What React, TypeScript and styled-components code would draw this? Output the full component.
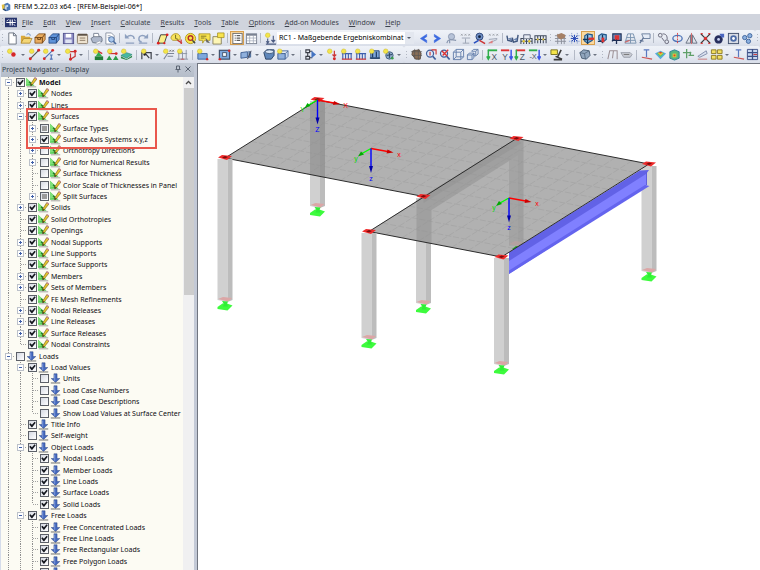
import React, { useEffect, useRef } from "react";
import styled, { createGlobalStyle, css } from "styled-components";

const GlobalStyle = createGlobalStyle`
  * { box-sizing: border-box; }
  html, body { margin: 0; padding: 0; overflow: hidden; }
  body, button, input, select {
    font-family: "Noto Sans", "Open Sans", sans-serif;
    font-size: 7px;
  }
  button { border: 0; background: none; padding: 0; color: inherit; }
`;

/* ---------- shell ---------- */

const Shell = styled.div`
  display: flex;
  flex-direction: column;
  height: 100vh;
  background: #fff;
  color: #1c1c1c;
  overflow: hidden;
`;

const TitleBar = styled.header`
  display: flex;
  align-items: center;
  gap: 3px;
  height: 14px;
  padding-left: 1px;
  flex: none;
`;

const Title = styled.h1`
  margin: 0;
  font-size: 7px;
  font-weight: 400;
  line-height: 14px;
  color: #000;
`;

const MenuBar = styled.nav`
  display: flex;
  align-items: center;
  height: 16px;
  flex: none;
  background: #d0d4dd;
`;

const MenuItem = styled.button`
  padding: 1px 5px 0;
  font-size: 7px;
  line-height: 15px;
  color: #3b414b;
  &::first-letter { text-decoration: underline; }
`;

const ToolbarRow = styled.div`
  display: flex;
  align-items: stretch;
  height: ${(p: { $h: number }) => p.$h}px;
  flex: none;
  background: #d4d9e3;
  overflow: hidden;
`;

const ToolGroup = styled.div<{ $grow?: boolean; $sep: number }>`
  --sep: ${(p) => p.$sep}px;
  display: flex;
  align-items: center;
  flex: ${(p) => (p.$grow ? "1 0 auto" : "none")};
  padding-right: 1px;
  border-radius: 2px;
  background: linear-gradient(#eff2f8, #e6eaf2 55%, #d9dee9);
`;

const Grip = styled.span`
  width: 5px;
  height: 10px;
  flex: none;
  background: radial-gradient(circle, #9aa1ae 1px, transparent 1px) 0 0 / 5px 3px;
  opacity: 0.7;
`;

const Separator = styled.span`
  width: var(--sep);
  height: 10px;
  flex: none;
  background: linear-gradient(#b4bac6, #b4bac6) center / 1px 100% no-repeat;
`;

const ToolButton = styled.button<{ $active?: boolean }>`
  display: grid;
  place-items: center;
  width: 14px;
  height: 14px;
  flex: none;
  ${(p) =>
    p.$active &&
    css`
      background: #fbd9a0;
      box-shadow: inset 0 0 0 1px #d9a04e;
    `}
`;

const Drop = styled.button`
  display: grid;
  place-items: center;
  width: 8px;
  height: 14px;
  flex: none;
  &::before {
    content: "";
    border: 2px solid transparent;
    border-top-color: #6b7280;
    border-bottom: 0;
  }
`;

const ComboBox = styled.div`
  position: relative;
  width: 137px;
  height: 12px;
  margin-right: 2px;
  flex: none;
  background: #fff;
  &::after {
    content: "";
    position: absolute;
    right: 3px;
    top: 5px;
    border: 2px solid transparent;
    border-top-color: #555c69;
    border-bottom: 0;
  }
`;

const Combo = styled.select`
  appearance: none;
  width: 100%;
  height: 12px;
  padding: 0 10px 0 2px;
  border: 0;
  border-radius: 0;
  background: linear-gradient(#e3e7ef, #e3e7ef) right / 9px 100% no-repeat;
  color: #000;
  line-height: 12px;
  font-family: "Noto Sans", sans-serif;
  font-size: 7px;
`;

/* ---------- icons ---------- */

const Icon = ({ name, size = 13 }: { name: string; size?: number }) => (
  <svg width={size} height={size} viewBox="0 0 14 14" fill="none" aria-hidden="true">
    {ICONS[name]}
  </svg>
);

const spark = <circle cx="4" cy="3.5" r="2.5" fill="#f3e54a" stroke="#c9b52a" strokeWidth=".5" />;
const lens = (
  <>
    <circle cx="6.5" cy="6" r="3.8" fill="#dfe9f8" stroke="#3f5f9c" strokeWidth="1.3" />
    <path d="M9.5 9l3 3.4" stroke="#3f5f9c" strokeWidth="1.8" />
  </>
);
const axisLetter = (main: string, other: string, letter: string) => (
  <>
    <path d="M2 2.500h10" stroke={main} strokeWidth="2" />
    <path d="M2.500 2v9.500M.8 9l1.700 3L4.200 9" stroke={other} strokeWidth="1.600" />
    <text x="9" y="12.500" textAnchor="middle" fontSize="9" fill="#4a5566" fontFamily="Liberation Sans, sans-serif">
      {letter}
    </text>
  </>
);

const ICONS: Record<string, React.ReactNode> = {
  app: (
    <>
      <path d="M4 3l5-2 4 3v7l-5 2-4-3z" fill="#4b77b5" />
      <path d="M6 5l4-1v3H8v4H5z" fill="#c8d8ea" />
      <path d="M1 4l4-1v6l-3 2z" fill="#e2bf3e" />
      <path d="M3 10l4 2" stroke="#26456f" strokeWidth="2" />
    </>
  ),
  menuApp: (
    <>
      <rect x="0" y="2" width="14" height="11" fill="#28356e" />
      <path d="M1.500 7.500h11M6 4v7M8.500 4v7" stroke="#fff" strokeWidth="1.200" />
      <path d="M2 6l2-2M10 10l2 1M11 4l1 2" stroke="#fff" />
    </>
  ),
  new: <path d="M3 1h5.500L11 3.500V13H3zM8 1v3h3" fill="#fff" stroke="#6b7280" />,
  open: (
    <>
      <path d="M1 12V4h4l1 1h5v7z" fill="#d9a93a" />
      <path d="M1 12l3-5h9l-2.500 5z" fill="#f4d676" stroke="#a17a24" strokeWidth=".7" />
      <path d="M7 3c2-2 4-1 4 1" stroke="#4f7bb8" />
    </>
  ),
  boxOrange: (
    <>
      <path d="M1 6l4-4h7v6l-3 4H1z" fill="#e9ac5e" stroke="#7a4a17" strokeWidth=".8" />
      <path d="M1 6h8l3-4M9 6v6M4 6v2h3V6" stroke="#6d4216" />
    </>
  ),
  boxBlue: (
    <>
      <path d="M1 6l4-4h7v6l-3 4H1z" fill="#5f93d9" stroke="#23457c" strokeWidth=".8" />
      <path d="M1 6h8l3-4M9 6v6M4 6v2h3V6" stroke="#23457c" />
    </>
  ),
  save: (
    <>
      <rect x="1.500" y="1.500" width="11" height="11" fill="#8d8cc4" stroke="#56558e" />
      <rect x="4" y="2" width="6" height="4" fill="#fff" />
      <rect x="3.500" y="8" width="7" height="4" fill="#dfe3f2" />
    </>
  ),
  saveAll: (
    <>
      <rect x="1.500" y="2.500" width="11" height="10" rx="1" fill="#eee3d0" stroke="#8a7a66" />
      <path d="M2 3h10" stroke="#5d5246" strokeWidth="2" />
      <path d="M4 6.500h6M4 9h6" stroke="#8a7a66" />
    </>
  ),
  print: (
    <>
      <path d="M4 6V1.500h5l1 4" fill="#fff" stroke="#7b8494" />
      <path d="M1 7l3-2h8l1 2v3l-3 1.500H3z" fill="#aeb8cb" stroke="#5f6878" strokeWidth=".8" />
      <path d="M5 12l6-2.500 1 2-4 1.500z" fill="#fff" stroke="#8a93a3" strokeWidth=".6" />
    </>
  ),
  preview: (
    <>
      <path d="M2 1h6l3 3v9H2z" fill="#fff" stroke="#8a93a3" />
      <path d="M4 4h3M4 6h2" stroke="#9aa3b3" />
      <circle cx="8" cy="8" r="3" fill="#a9c7ec" stroke="#4a6c9f" />
      <path d="M10 10l3 3" stroke="#4a6c9f" strokeWidth="1.600" />
    </>
  ),
  undo: (
    <>
      <path d="M2 2v5h5z" fill="#8ea0bf" />
      <path d="M4 5.500C7 3 12 3 12 7.500M3 12h9" stroke="#8ea0bf" strokeWidth="1.500" />
    </>
  ),
  redo: (
    <>
      <path d="M12 2v5H7z" fill="#8ea0bf" />
      <path d="M10 5.500C7 3 2 3 2 7.500c0 2 1 3 3 3M2 12h9" stroke="#8ea0bf" strokeWidth="1.500" />
    </>
  ),
  plane: (
    <>
      <path d="M2 12l3-9h7l-3 9z" fill="#fbf08a" stroke="#3c3c3c" />
      <circle cx="2.500" cy="12" r="1.500" fill="#d22" />
      <circle cx="12" cy="3" r="1.500" fill="#d22" />
      <circle cx="9" cy="12" r="1.200" fill="#d22" />
    </>
  ),
  pickYellow: (
    <>
      <path d="M1 7c0-4 4-6 7-5s4 5 2 7H3z" fill="#f6e35c" stroke="#a88a1c" strokeWidth=".8" />
      <path d="M6 3v4l3 1" stroke="#6f6520" />
      <path d="M8 9l5 3M12 8v5" stroke="#c93030" strokeWidth="1.300" />
    </>
  ),
  target: (
    <>
      <circle cx="7" cy="7" r="5.500" fill="#f9e548" stroke="#b4971e" />
      <circle cx="7" cy="6.500" r="2.500" stroke="#b32f2f" strokeWidth="1.500" />
      <path d="M9 9l3 3" stroke="#444" strokeWidth="1.500" />
    </>
  ),
  note: (
    <>
      <path d="M1 2h12v7H7l-2 3V9H1z" fill="#f8e44e" stroke="#a38d1e" strokeWidth=".8" />
      <path d="M3 4.500h6M3 6.500h4" stroke="#7d6f20" />
      <path d="M8 6l5 6-4-1z" fill="#666" />
    </>
  ),
  noteFolder: (
    <>
      <path d="M1 5h9v8H1z" fill="#fdf6b5" stroke="#8a8460" />
      <path d="M6 1h7v5H6z" fill="#f8e44e" stroke="#a38d1e" strokeWidth=".8" />
    </>
  ),
  panel: (
    <>
      <rect x="2" y="1.500" width="10" height="11" fill="#fff" stroke="#6d6d6d" />
      <path d="M4 4h1M6 4h4M4 6.500h1M6 6.500h4M4 9h1M6 9h4" stroke="#5c5c5c" strokeWidth="1.300" />
    </>
  ),
  table: (
    <>
      <rect x="1.500" y="2" width="11" height="10.500" fill="#fff" stroke="#7b8392" />
      <path d="M1.500 3h11" stroke="#7b8392" strokeWidth="2" />
      <path d="M2 6.500h10M2 9.500h10M5 4v8M9 4v8" stroke="#9fa8b8" strokeWidth=".8" />
    </>
  ),
  loadNew: (
    <>
      {spark}
      <path d="M10 4v6M8 8.500l2 2.500 2-2.500M4 7v5M2.500 10L4 12l1.500-2M2 13h11" stroke="#4a5a80" strokeWidth="1.200" />
    </>
  ),
  prev: <path d="M10.500 2.500L3.500 7l7 4.500V9L7.500 7l3-2z" fill="#3c6ae0" stroke="#3c6ae0" strokeWidth=".5" />,
  next: <path d="M3.500 2.500L10.500 7l-7 4.500V9l3-2-3-2z" fill="#3c6ae0" stroke="#3c6ae0" strokeWidth=".5" />,
  viewGrey: (
    <>
      <circle cx="7" cy="5" r="3.300" fill="#b7c3d8" stroke="#8a97b0" />
      <path d="M2 12c1-5 4-4 10-3M5 12V8" stroke="#8a97b0" strokeWidth="1.300" />
    </>
  ),
  xxGrey: (
    <>
      <path d="M2 2l2 2M4 2L2 4M6 2l2 2M8 2L6 4M10 2l2 2M12 2l-2 2" stroke="#8b8f98" strokeWidth=".7" />
      <path d="M3 6.500h9M7 7v5M4 12h7" stroke="#9aa3b3" />
    </>
  ),
  eye: (
    <>
      <circle cx="7" cy="5" r="3.800" fill="#6f8fc4" stroke="#2e4679" />
      <circle cx="7" cy="5" r="1.500" fill="#10203f" />
      <path d="M7 9l6 3.500" stroke="#c33" strokeWidth="1.600" />
      <path d="M1 12l5-3" stroke="#2950c0" strokeWidth="1.800" />
    </>
  ),
  xxRed: (
    <>
      <path d="M2 2l2 2M4 2L2 4M6 2l2 2M8 2L6 4M10 2l2 2M12 2l-2 2" stroke="#8b8f98" strokeWidth=".7" />
      <path d="M2 8l9-1M2 12l9-4" stroke="#9aa3b3" />
      <path d="M1 12l5-3v3z" fill="#e08080" />
    </>
  ),
  glasses: (
    <>
      <path d="M1 4l1 5 4 1 1-4M7 7l1 4 4-1 1-7" stroke="#3f557c" strokeWidth="1.500" />
      <path d="M2 7l4-1v4zM8 8l4-2v4z" fill="#6e86b0" />
    </>
  ),
  calc: (
    <>
      <path d="M1 13V7h12v6M1 10h12M4 7v6M7 7v6M10 7v6" stroke="#3f4a5c" strokeWidth="1.100" />
      <path d="M4 7V3h7v4" fill="#e7ebf3" stroke="#56617a" />
      <circle cx="4" cy="10" r="1.300" fill="#e5c93a" />
      <circle cx="10" cy="10" r="1.300" fill="#e5c93a" />
    </>
  ),
  calcRow: (
    <>
      <path d="M1 12V4h12v8M1 8h12M4 4v8M7 4v8M10 4v8" stroke="#3f4a5c" strokeWidth="1.100" />
      <path d="M3 7h2v2H3zM9 7h2v2H9z" fill="#e5c93a" />
    </>
  ),
  gridHand: (
    <>
      <path d="M1 4h12M1 7h12M1 10h12M4 2v11M8 4v9M11 4v9" stroke="#8a8f99" />
      <path d="M3 3l5-2 4 2v3l-5 2-3-2z" fill="#a58065" />
    </>
  ),
  snap: (
    <>
      <path d="M1 4h12M1 10h12M4 1v12M10 1v12" stroke="#8fa3cf" strokeDasharray="1.500 1" />
      <path d="M7 3v8M3 7h8M4 4l6 6M10 4l-6 6" stroke="#2748b5" />
    </>
  ),
  csys: (
    <>
      <path d="M3 7V4l3-2 5 1v6l-5 3-3-2z" fill="#9cc7ea" stroke="#24598c" strokeWidth="1.300" />
      <path d="M1 8h8M6 3v10" stroke="#14385e" strokeWidth="1.500" />
      <path d="M7 6h6v2.500H7z" fill="#d33" />
    </>
  ),
  csys2: (
    <>
      <path d="M3 8V4l3-2 5 1v5l-4 3z" fill="#8ebce4" stroke="#24598c" strokeWidth="1.300" />
      <path d="M2 10h5M7 3v9" stroke="#14385e" strokeWidth="1.400" />
      <path d="M6 6h3v5H6z" fill="#d33" />
    </>
  ),
  csys3: (
    <>
      <path d="M3 2h9v7H3z" fill="#6a8fc4" stroke="#1f2f55" strokeWidth="1.200" />
      <path d="M5 3.500h5v5H5z" fill="#d33" />
      <path d="M2 10l3-2M7 8v5" stroke="#1f2f55" strokeWidth="1.400" />
    </>
  ),
  meshGrey: (
    <>
      <path d="M4 2h6l3 10H1zM3 6h8M2 9h10M7 2v10" stroke="#7b94b0" />
      <path d="M1 11l5-2" stroke="#c66" strokeWidth="1.300" />
    </>
  ),
  mark: (
    <>
      <path d="M4 2h9v5H6z" fill="#e4ebf6" stroke="#6c7f9e" />
      <path d="M2 12l4-6M2 9l4 1" stroke="#5b6f92" strokeWidth="1.300" />
    </>
  ),
  moveCopy: (
    <>
      <circle cx="3.500" cy="3.500" r="2" stroke="#667" />
      <circle cx="10.500" cy="10.500" r="2" stroke="#667" />
      <path d="M6 2c4 0 5 2 5 6M5 6l3 4" stroke="#667" />
    </>
  ),
  rotate: (
    <>
      <ellipse cx="7" cy="7" rx="5" ry="3.300" stroke="#4d74b8" strokeWidth="1.400" />
      <path d="M7 1v12" stroke="#d44" strokeDasharray="2 1" />
    </>
  ),
  mirror: (
    <>
      <path d="M6 3v9H1zM8 3v9h5z" fill="#dfe3ea" stroke="#677082" />
      <path d="M7 1v12" stroke="#c44" strokeWidth=".8" />
    </>
  ),
  scaleX: (
    <>
      <path d="M2 2l10 10M12 2L2 12" stroke="#3b3b3b" strokeWidth="1.400" />
      <path d="M1 1h3v2zM13 1h-3v2zM1 13h3v-2zM13 13h-3v-2z" fill="#d33" />
      <circle cx="7" cy="7" r="1.800" fill="#d33" />
    </>
  ),
  bomb: (
    <>
      <circle cx="6" cy="8" r="4.500" fill="#272f5e" />
      <path d="M7 2h5v4H9z" fill="#4a66c0" />
      <circle cx="6" cy="8" r="1.500" fill="#cdd6f5" />
    </>
  ),
  frameBlue: (
    <>
      <rect x="1.500" y="1.500" width="11" height="11" fill="#d7dbe4" stroke="#41506e" />
      <circle cx="7" cy="7" r="3.500" fill="#4c6ca8" />
      <circle cx="7" cy="7" r="1.500" fill="#fff" />
    </>
  ),
  cluster: (
    <>
      <circle cx="4" cy="6" r="2.300" fill="#8bb0e0" stroke="#3e639c" />
      <circle cx="9.500" cy="4" r="2.300" fill="#8bb0e0" stroke="#3e639c" />
      <circle cx="8" cy="10" r="2.300" fill="#8bb0e0" stroke="#3e639c" />
    </>
  ),
  node: (
    <>
      {spark}
      <circle cx="8" cy="7" r="2.400" fill="#d62828" />
    </>
  ),
  line: (
    <>
      <path d="M2 12L12 2" stroke="#555" strokeWidth="1.300" />
      <circle cx="2.500" cy="11.500" r="1.600" fill="#d62828" />
      <circle cx="11.500" cy="2.500" r="1.600" fill="#d62828" />
      {spark}
    </>
  ),
  member: (
    <>
      <path d="M2 12L12 2M10 7v5M8.500 7.500h3M8.500 12h3" stroke="#4c6fb5" strokeWidth="1.200" />
      <circle cx="2.500" cy="11.500" r="1.500" fill="#d62828" />
      <circle cx="11.500" cy="2.500" r="1.500" fill="#d62828" />
      {spark}
    </>
  ),
  polyline: (
    <>
      <path d="M3 4h9M12 4v5l-5 3V6" stroke="#c63535" strokeWidth="1.300" />
      <circle cx="12" cy="3.500" r="1.600" fill="#d62828" />
      <circle cx="7" cy="12" r="1.600" fill="#d62828" />
      {spark}
    </>
  ),
  support: (
    <>
      <path d="M7 4l4 5H4z" fill="#2fae4e" />
      <path d="M3 9h9v4H3z" fill="#217d38" />
      <path d="M6 3l5 3" stroke="#c33" strokeWidth="1.500" />
      {spark}
    </>
  ),
  supports: (
    <>
      <path d="M3 6h8" stroke="#c33" strokeWidth="1.300" />
      <path d="M3.500 8l3 5H.5zM10.500 8l3 5h-6z" fill="#2b9a47" />
      <circle cx="11" cy="6" r="1.500" fill="#d62828" />
      {spark}
    </>
  ),
  surfSupport: (
    <>
      <path d="M1 8l6-3 6 2-6 4z" fill="#49b8a0" stroke="#217d6a" strokeWidth=".6" />
      <path d="M1 9l6 3 6-4v2l-6 3-6-2z" fill="#2b8a47" />
      {spark}
    </>
  ),
  hinge: (
    <>
      <path d="M2 12V5h10v7M5 5l5 6" stroke="#3b3f48" strokeWidth="1.300" />
      <circle cx="5" cy="7" r="1.300" fill="#222" />
      {spark}
    </>
  ),
  dimXX: (
    <>
      <path d="M2 12l4-6h7M6 9h6" stroke="#7c8596" strokeWidth="1.100" />
      <path d="M8 2l2 2M10 2L8 4M11 2l2 2M13 2l-2 2" stroke="#555" strokeWidth=".7" />
      {spark}
    </>
  ),
  dimGrid: (
    <>
      <path d="M3 5v8M1 12h12M11 2v10M7 4v8M2 6h10" stroke="#8b93a3" />
      <path d="M5 12h4" stroke="#c55" />
      {spark}
    </>
  ),
  surface: (
    <>
      <path d="M2 6h10v6H2z" fill="#7fa8dd" stroke="#3e639c" />
      <circle cx="12" cy="12" r="1.300" fill="#d62828" />
      {spark}
    </>
  ),
  opening: (
    <>
      <rect x="1.500" y="2.500" width="11" height="9.500" fill="#7fa8dd" stroke="#44546f" strokeWidth="1.300" />
      <rect x="5" y="5" width="4" height="4" fill="#fff" stroke="#44546f" />
      <circle cx="12" cy="3" r="1.300" fill="#d62828" />
      <circle cx="2" cy="12" r="1.300" fill="#d62828" />
    </>
  ),
  solid: (
    <>
      <path d="M1 5l7-1v6l-7 1z" fill="#8fb0dc" stroke="#3e5f92" />
      <path d="M9 3l3 1v6l-3 1z" fill="#55759f" />
      <path d="M8 12l4-9" stroke="#445" />
    </>
  ),
  solidCup: (
    <>
      <path d="M2 5l3-3h8v6l-3 4H4z" fill="#5e87bb" stroke="#2a4262" />
      <ellipse cx="8" cy="4" rx="4.500" ry="2" fill="#dbe8f7" stroke="#2a4262" strokeWidth=".8" />
    </>
  ),
  solidBox: (
    <>
      <path d="M2 6h8v6H2z" fill="#8fb0dc" stroke="#3e5f92" />
      <path d="M2 6l3-3h8v6l-3 3V6l3-3" fill="#c6d8ef" stroke="#3e5f92" strokeWidth=".8" />
      {spark}
    </>
  ),
  mergeBlock: (
    <>
      <path d="M2 2h4v3H2zM2 9h4v3H2zM6 3.500h3M6 10.500h3M4 5v4" stroke="#3b3f48" strokeWidth="1.200" />
      <path d="M8 3l5 4-5 4z" fill="#4474c2" />
    </>
  ),
  loadNode: (
    <>
      <path d="M9 3v5M7 7l2 2 2-2" stroke="#c33" strokeWidth="1.300" />
      <circle cx="9" cy="11.500" r="1.600" fill="#d62828" />
      {spark}
    </>
  ),
  loadMember: (
    <>
      <path d="M2 6h11M3 6v6M6 6v6M9 6v6M12 6v6" stroke="#3d5fae" strokeWidth="1.200" />
      <path d="M2 12h11" stroke="#c33" strokeWidth="1.300" />
      {spark}
    </>
  ),
  loadSurface: (
    <>
      <path d="M3 3h9v8H3z" fill="#7ea6d8" stroke="#274a78" />
      <path d="M5 4v6M9 4v6M2 11h11" stroke="#1f3c63" strokeWidth="1.300" />
      {spark}
    </>
  ),
  loadSolid: (
    <>
      <circle cx="8" cy="8" r="4" fill="#8ea9c9" stroke="#44607f" />
      <path d="M8 5v6M5 8l6-1" stroke="#27415e" />
      <circle cx="11" cy="11" r="1.500" fill="#3a9a50" />
      {spark}
    </>
  ),
  hand: (
    <>
      <path d="M3 3l7-1 2 4-1 6H6L2 7z" fill="#8a6f58" stroke="#4a3c30" strokeWidth=".8" />
      <path d="M1 4h12M2 8h11M5 1v11M9 1v12" stroke="#555" strokeWidth=".7" />
    </>
  ),
  zoomIn: (
    <>
      {lens}
      <path d="M6.500 4v4M8 2h5v5" stroke="#c33" strokeWidth="1.200" />
    </>
  ),
  zoomX: (
    <>
      {lens}
      <path d="M4 3l6 6M11 2L5 8" stroke="#d33" strokeWidth="1.500" />
    </>
  ),
  cube: <path d="M1.500 4.500h8v8h-8zM1.500 4.500l3-3h8v8l-3 3M9.500 4.500l3-3M4.500 1.500v8h8M4.500 9.500l-3 3" stroke="#6580ac" />,
  cubes: (
    <>
      <path d="M1.500 7.500h5v5h-5zM6.500 7.500l2-2v5l-2 2M1.500 7.500l2-2h5" fill="#dbe4f2" stroke="#6580ac" />
      <path d="M6 3.500h4.500v5H8.500V5.500M6 3.500l2-2h5v5l-2.500 2M10.500 3.500l2.500-2" stroke="#6580ac" />
    </>
  ),
  axX: axisLetter("#2eae4a", "#2eae4a", "X"),
  axY: (
    <>
      <path d="M1 2.500h9" stroke="#d33" strokeWidth="2" />
      <path d="M12 2v9.500M10.300 9l1.700 3 1.700-3" stroke="#3b55e8" strokeWidth="1.600" />
      <text x="5.500" y="12.500" textAnchor="middle" fontSize="9" fill="#4a5566" fontFamily="Liberation Sans, sans-serif">
        Y
      </text>
    </>
  ),
  axZ: axisLetter("#d33", "#2eae4a", "Z"),
  axMinusX: (
    <>
      <path d="M1 2.500h9" stroke="#2eae4a" strokeWidth="2" />
      <path d="M12 2v9.500M10.300 9l1.700 3 1.700-3" stroke="#3b55e8" strokeWidth="1.600" />
      <text x="5.500" y="12" textAnchor="middle" fontSize="8" fill="#4a5566" fontFamily="Liberation Sans, sans-serif">
        -X
      </text>
    </>
  ),
  lamp: (
    <>
      <path d="M1 2h7v5H1z" fill="#f5e54a" stroke="#77701f" />
      <path d="M12 2L8 10M6 9l7 3M4 12.500h9" stroke="#3b3b3b" strokeWidth="1.700" />
    </>
  ),
  gems: (
    <>
      <path d="M2 5l4-3 6 1 1 5-4 4-5-1z" fill="#91a6bd" stroke="#4d6076" />
      <path d="M2 5l5 1 5-3M7 6l1 6" stroke="#4d6076" strokeWidth=".8" />
    </>
  ),
  frameGrey: <path d="M2 12l2-9h8v9M4 3h4l-1 8" stroke="#9a8f94" strokeWidth="1.100" />,
  tagGrey: (
    <>
      <path d="M1 5h10l2 2-2 3H4z" fill="#c9ccd3" stroke="#989ea9" />
      <path d="M4 7h6" stroke="#777" />
    </>
  ),
  resI: (
    <>
      <path d="M4 2h6M7 2v8" stroke="#5a78c0" strokeWidth="1.300" />
      <path d="M2 10l11 2" stroke="#c55" strokeWidth="1.200" />
    </>
  ),
  rainbow: (
    <>
      <path d="M1 6l6-3 6 3-6 6z" fill="#58a8e0" />
      <path d="M3 6l4-2 4 2-4 4z" fill="#5cc46e" />
      <path d="M4 5.500L7 4l3 1.500L7 8z" fill="#e9c23a" />
      <path d="M5 5l2-1 2 1-2 1z" fill="#dd4330" />
    </>
  ),
  rainbowCube: (
    <>
      <path d="M2 4l5-2 5 2v7l-5 2-5-2z" fill="#58b77c" stroke="#2f7f9a" />
      <path d="M5 6h4v4H5z" fill="#e3ca3c" />
      <path d="M6 7h2v2H6z" fill="#dd4330" />
    </>
  ),
  plusGreen: <path d="M5 1v10M1 5h9M9 4v4M7 8h6" stroke="#5fa069" strokeWidth="1.400" />,
  slope: (
    <>
      <path d="M2 9l9-6 1 3-8 4z" fill="#dbe2f0" stroke="#7f8daa" />
      <path d="M2 12h10" stroke="#c77" />
    </>
  ),
  panels: <path d="M1.500 2h5v4h-5zM8 2h5v4H8zM1.500 8h5v4h-5zM8 8h5v4H8z" fill="#f2df62" stroke="#8b7a25" />,
  tables: (
    <>
      <path d="M1.500 1.500h11v11h-11z" fill="#c7d6ef" stroke="#3c4f86" />
      <path d="M1.500 5h11M1.500 9h11M7 1v12" stroke="#3c4f86" strokeWidth="1.400" />
      <path d="M8 7h4" stroke="#c33" />
    </>
  ),
  model: (
    <>
      <path d="M0 1v10h11z" fill="#4cc94f" />
      <path d="M0 1v9l5-1 1-2z" fill="#7fe07a" />
      <path d="M1 12.500h12" stroke="#8b8b8b" />
      <path d="M4 6l3 3" stroke="#247a28" strokeWidth="2" />
      <path d="M6 9l5-8 3 1.500L8 10l-2 1z" fill="#e8c52e" stroke="#5f4e10" strokeWidth=".7" />
      <path d="M11 .8l3 1.700" stroke="#c98b97" strokeWidth="1.800" />
      <path d="M6 9l2 1-2 1.500z" fill="#222" />
    </>
  ),
  load: (
    <>
      <path d="M5 1h4v6h3.500L7 12 1.500 7H5z" fill="#4468bd" stroke="#2a4585" strokeWidth=".6" />
      <path d="M6 2v8" stroke="#90abe6" />
      <path d="M1 12.700h12" stroke="#666" strokeWidth="1.200" />
    </>
  ),
};

/* ---------- tree ---------- */

const Workspace = styled.main`
  display: flex;
  flex: 1;
  min-height: 0;
`;

const Navigator = styled.aside`
  display: flex;
  flex-direction: column;
  width: 197px;
  flex: none;
  border-left: 1px solid #d5dcea;
  border-right: 3px solid #c3c9d6;
  background: #f5f7fb;
`;

const NavHeader = styled.div`
  display: flex;
  align-items: center;
  height: 14px;
  flex: none;
  padding: 0 2px 0 1px;
  gap: 2px;
  background: linear-gradient(#c3cad5, #b5bdc9);
  color: #333c49;
`;

const NavTitle = styled.h2`
  flex: 1;
  margin: 0;
  font-size: 7px;
  font-weight: 400;
  line-height: 14px;
`;

const NavBody = styled.div`
  position: relative;
  display: flex;
  flex: 1;
  min-height: 0;
  overflow: hidden;
`;

const Tree = styled.ul`
  flex: 1;
  min-width: 0;
  margin: 0;
  padding: 0 0 0 2px;
  list-style: none;
  overflow: hidden;
  background: #fcfbf3;
`;

const TreeRow = styled.li`
  display: flex;
  align-items: center;
  height: 11px;
  white-space: nowrap;
  &:nth-child(5n + 3), &:nth-child(5n) { height: 12px; }
`;

const Guide = styled.span<{ $line: boolean }>`
  width: 12px;
  align-self: stretch;
  flex: none;
  background: ${(p) =>
    p.$line ? "repeating-linear-gradient(#8f8f8f 0 1px, transparent 1px 2px) 5px 0 / 1px 100% no-repeat" : "none"};
`;

const Branch = styled(Guide)<{ $last?: boolean }>`
  display: flex;
  align-items: center;
  background:
    repeating-linear-gradient(90deg, #a2a2a2 0 1px, transparent 1px 2px) 6px 50% / 6px 1px no-repeat,
    repeating-linear-gradient(#8f8f8f 0 1px, transparent 1px 2px) 5px 0 / 1px ${(p) => (p.$last ? "50%" : "100%")} no-repeat;
`;

const Expander = styled.button<{ $open: boolean }>`
  width: 7px;
  height: 7px;
  margin-left: 2px;
  border: 1px solid #bcc1ca;
  background:
    linear-gradient(#3f5fa8, #3f5fa8) center / 3px 1px no-repeat,
    ${(p) => (p.$open ? "" : "linear-gradient(#3f5fa8, #3f5fa8) center / 1px 3px no-repeat,")}
    #fff;
`;

const Check = styled.input`
  appearance: none;
  display: grid;
  place-items: center;
  width: 9px;
  height: 9px;
  margin: 0 1px;
  flex: none;
  border: 1px solid #5c6068;
  background: linear-gradient(135deg, #d5d9e2, #fff);
  &:checked::before {
    content: "";
    width: 7px;
    height: 7px;
    background: #15181f;
    clip-path: polygon(4% 45%, 20% 32%, 42% 54%, 80% 12%, 96% 26%, 46% 88%, 36% 88%);
  }
  &:indeterminate::before {
    content: "";
    width: 5px;
    height: 5px;
    background: #9b9b9b;
  }
`;

const RowLabel = styled.label<{ $bold: boolean }>`
  display: flex;
  align-items: center;
  gap: 2px;
  font-size: 7px;
  line-height: 11px;
  color: #0c0c12;
  font-weight: ${(p) => (p.$bold ? 700 : 400)};
`;

const ScrollTrack = styled.div`
  display: flex;
  flex-direction: column;
  align-items: center;
  width: 11px;
  flex: none;
  background: #f0f0f1;
`;

const ScrollUp = styled.button`
  display: grid;
  place-items: center;
  width: 11px;
  height: 11px;
`;

const ScrollThumb = styled.div`
  width: 10px;
  height: 42%;
  background: #cdcdcd;
`;

const Highlight = styled.div`
  position: absolute;
  left: 25px;
  top: 31px;
  width: 131px;
  height: 41px;
  border: 2px solid #e9574c;
  pointer-events: none;
`;

type State = "on" | "off" | "mixed";
type Mark = "+" | "-" | "";
type Item = { label: string; depth: number; mark: Mark; state: State; icon: "model" | "load" };

const item = (depth: number, mark: Mark, state: State, label: string, icon: "model" | "load" = "model"): Item => ({
  depth, mark, state, label, icon,
});
const load = (depth: number, mark: Mark, state: State, label: string) => item(depth, mark, state, label, "load");

const ITEMS: Item[] = [
  item(0, "-", "on", "Model"),
  item(1, "+", "on", "Nodes"),
  item(1, "+", "on", "Lines"),
  item(1, "-", "on", "Surfaces"),
  item(2, "+", "mixed", "Surface Types"),
  item(2, "+", "on", "Surface Axis Systems x,y,z"),
  item(2, "+", "off", "Orthotropy Directions"),
  item(2, "+", "off", "Grid for Numerical Results"),
  item(2, "", "off", "Surface Thickness"),
  item(2, "", "off", "Color Scale of Thicknesses in Panel"),
  item(2, "+", "mixed", "Split Surfaces"),
  item(1, "+", "on", "Solids"),
  item(1, "", "on", "Solid Orthotropies"),
  item(1, "", "on", "Openings"),
  item(1, "+", "on", "Nodal Supports"),
  item(1, "+", "on", "Line Supports"),
  item(1, "", "on", "Surface Supports"),
  item(1, "+", "on", "Members"),
  item(1, "+", "on", "Sets of Members"),
  item(1, "", "on", "FE Mesh Refinements"),
  item(1, "+", "on", "Nodal Releases"),
  item(1, "+", "on", "Line Releases"),
  item(1, "+", "on", "Surface Releases"),
  item(1, "", "on", "Nodal Constraints"),
  load(0, "-", "off", "Loads"),
  load(1, "-", "on", "Load Values"),
  load(2, "", "off", "Units"),
  load(2, "", "off", "Load Case Numbers"),
  load(2, "", "off", "Load Case Descriptions"),
  load(2, "", "off", "Show Load Values at Surface Center"),
  load(1, "", "on", "Title Info"),
  load(1, "", "off", "Self-weight"),
  load(1, "-", "on", "Object Loads"),
  load(2, "", "on", "Nodal Loads"),
  load(2, "", "on", "Member Loads"),
  load(2, "", "on", "Line Loads"),
  load(2, "", "on", "Surface Loads"),
  load(2, "", "on", "Solid Loads"),
  load(1, "-", "on", "Free Loads"),
  load(2, "", "on", "Free Concentrated Loads"),
  load(2, "", "on", "Free Line Loads"),
  load(2, "", "on", "Free Rectangular Loads"),
  load(2, "", "on", "Free Polygon Loads"),
  load(2, "", "on", ""),
];

const isLast = (i: number) => {
  const next = ITEMS.slice(i + 1).find((n) => n.depth <= ITEMS[i].depth);
  return i < ITEMS.length - 6 && ITEMS[i].depth > 0 && (!next || next.depth < ITEMS[i].depth);
};

const Row = ({ data, index }: { data: Item; index: number }) => {
  const ref = useRef<HTMLInputElement>(null);
  const id = `nav-${index}`;
  useEffect(() => {
    if (ref.current) ref.current.indeterminate = data.state === "mixed";
  }, [data.state]);
  return (
    <TreeRow>
      {Array.from({ length: data.depth }, (_, d) => (
        <Guide key={d} $line />
      ))}
      <Branch $line $last={isLast(index)}>
        {data.mark && <Expander $open={data.mark === "-"} aria-label={`Toggle ${data.label}`} />}
      </Branch>
      <Check ref={ref} id={id} type="checkbox" defaultChecked={data.state === "on"} />
      <RowLabel htmlFor={id} $bold={data.label === "Model"}>
        <Icon name={data.icon} size={11} />
        {data.label}
      </RowLabel>
    </TreeRow>
  );
};

/* ---------- model view ---------- */

const Viewport = styled.section`
  flex: 1;
  min-width: 0;
  border-top: 1px solid #70757f;
  border-left: 1px solid #70757f;
  background: #fff;
  overflow: hidden;
`;

const Scene = styled.svg`
  display: block;
  width: 100%;
  height: 100%;
  font-family: "Liberation Sans", sans-serif;
  font-size: 7px;
`;

const Column = ({ x, top, bottom }: { x: number; top: number; bottom: number }) => (
  <g>
    <path d={`M${x - 7.5} ${top}h10v${bottom - top + 2}l-10 -2z`} fill="#d0d0d0" />
    <path d={`M${x + 2.5} ${top}h5v${bottom - top}l-5 2z`} fill="#bcbcbc" />
    <path d={`M${x - 7} ${bottom - 1}l5 -2 9 1 -4 3.500z`} fill="#dba6a6" />
  </g>
);

const Foot = ({ x, y }: { x: number; y: number }) => (
  <g>
    <path d={`M${x - 7.5} ${y + 6}l5 -3.500 3 -.5 7 2.500 -5 5 -10 -1.500z`} fill="#3dfb3d" />
    <path d={`M${x - 3} ${y}l6 .5 -1 2.500 1 2.500h-5l1 -2.500z`} fill="#2fee36" />
  </g>
);

const Joint = ({ x, y }: { x: number; y: number }) => (
  <g>
    <path d={`M${x - 7} ${y}l4 -2.500 10 1 -5 4z`} fill="#ee2b2b" />
    <path d={`M${x - 3} ${y}l3 -1.500 3 1 -3 1.500z`} fill="#7d0c0c" />
  </g>
);

const Axes = ({ x, y, names }: { x: number; y: number; names: [string, string, string] }) => (
  <g textAnchor="middle">
    <path d={`M${x} ${y}l18 3.200`} stroke="#f00" strokeWidth="1.400" />
    <path d={`M${x + 16.5} ${y + 1}l6 3 -7 1z`} fill="#c00" />
    <path d={`M${x} ${y}l-9 5`} stroke="#0f0" strokeWidth="1.400" />
    <path d={`M${x - 13} ${y + 8}l3 -5 3 3z`} fill="#0a0" />
    <path d={`M${x} ${y}v18`} stroke="#00f" strokeWidth="1.400" />
    <path d={`M${x - 2} ${y + 17.5}h4l-2 7z`} fill="#00a" />
    <text x={x + 28} y={y + 8} fill="#f00">{names[0]}</text>
    <text x={x - 15} y={y + 12} fill="#0d0">{names[1]}</text>
    <text x={x} y={y + 32} fill="#00f">{names[2]}</text>
  </g>
);

const gridLines = (
  ox: number, oy: number, ux: number, uy: number, vx: number, vy: number, nu: number, nv: number
) => {
  let d = "";
  for (let i = 1; i < nu; i++) d += `M${ox + (ux * i) / nu} ${oy + (uy * i) / nu}l${vx} ${vy}`;
  for (let i = 1; i < nv; i++) d += `M${ox + (vx * i) / nv} ${oy + (vy * i) / nv}l${ux} ${uy}`;
  return d;
};

const ModelView = () => (
  <Scene viewBox="198 64 562 506" preserveAspectRatio="xMinYMin meet" fill="none" role="img" aria-label="Structural model">
    <Column x={317.5} top={101} bottom={206} />
    <Column x={516.5} top={140} bottom={246} />
    <Column x={423.5} top={198} bottom={303} />
    <Column x={649} top={166} bottom={271} />
    <Foot x={317.5} y={207} />
    <Foot x={423.5} y={304} />
    <Foot x={649} y={272} />

    <path d="M317.500 100L516.500 138.500 649 164 501.500 257 369 231.500 423.500 196.500 225 158z" fill="#b1b1b1" />
    <path
      d={gridLines(317.5, 100, 199, 38.5, -93, 58, 12, 7) + gridLines(516.5, 138.5, 132, 25.5, -147.5, 93, 8, 11)}
      stroke="#a4a4a4" strokeWidth=".8" strokeDasharray="6 2"
    />
    <path d="M310 104.500l7.500-4 7.500 1.500v75.500l-15-3z" fill="#8f8f8f" opacity=".6" />
    <path d="M320 101v75.500l5 1V102z" fill="#8f8f8f" opacity=".3" />
    <path d="M516.500 138.500l7 1v103l-4 3H509v-84.500l-77.500 49v33.500l-15-3v-40.500z" fill="#929292" opacity=".55" />
    <path d="M516.500 138.500L423.500 197v6l98-60z" fill="#808080" opacity=".22" />
    <path d="M509 161v84h9v-90z" fill="#b1b1b1" opacity=".25" />
    <path d="M509 244l6-3 8 1-6 4z" fill="#c0a0a0" opacity=".6" />
    <path d="M512 249l4-3 3 .5-5 3z" fill="#2aa82a" />

    <path d="M509 252.500L640 170.500l6.500 1.500v14L509 274z" fill="#8080ff" />
    <path d="M509 252.500L640 170.500l9-.5-3 4L509 261z" fill="#6262e6" />
    <path d="M509 270.500L645 185l4.500 1L509 274z" fill="#6464ee" />
    <path d="M646.500 172v13" stroke="#5e5edc" />
    <path d="M317.500 100L649 164 501.500 257 369 231.500 516.500 138.500M423.500 196.500L225 158 317.500 100" stroke="#2c2c2c" />

    <Column x={225} top={159} bottom={300} />
    <Column x={369} top={233} bottom={338} />
    <Column x={501.5} top={258} bottom={364} />
    <Foot x={225} y={301} />
    <Foot x={369} y={339} />
    <Foot x={501.5} y={365} />

    <Joint x={317.5} y={99.5} />
    <Joint x={225} y={157.5} />
    <Joint x={423.5} y={196.5} />
    <Joint x={516.5} y={138.5} />
    <Joint x={369} y={231.5} />
    <Joint x={501.5} y={257} />
    <Joint x={649} y={164} />

    <Axes x={317.5} y={100} names={["X", "Y", "Z"]} />
    <Axes x={371} y={148.5} names={["x", "y", "z"]} />
    <Axes x={509} y={198} names={["x", "y", "z"]} />
  </Scene>
);

/* ---------- toolbars ---------- */

/* Tokens: an icon name, "|" for a separator, "v" for a menu arrow, "*name" for a pressed button. */
const Tools = ({ spec }: { spec: string }) => (
  <>
    {spec.split(" ").map((t, i) => {
      if (t === "|") return <Separator key={i} />;
      if (t === "v") return <Drop key={i} aria-label="More" />;
      const name = t.replace("*", "");
      return (
        <ToolButton key={i} $active={t.startsWith("*")} aria-label={name}>
          <Icon name={name} />
        </ToolButton>
      );
    })}
  </>
);

const MENUS = [
  "File", "Edit", "View", "Insert", "Calculate", "Results", "Tools", "Table", "Options", "Add-on Modules", "Window", "Help",
];

export default function App() {
  return (
    <Shell>
      <GlobalStyle />
      <TitleBar>
        <Icon name="app" size={10} />
        <Title>RFEM 5.22.03 x64 - [RFEM-Beispiel-06*]</Title>
      </TitleBar>
      <MenuBar>
        <Grip />
        <Icon name="menuApp" size={12} />
        {MENUS.map((m) => (
          <MenuItem key={m}>{m}</MenuItem>
        ))}
      </MenuBar>
      <ToolbarRow $h={16}>
        <ToolGroup $sep={5}>
          <Grip />
          <Tools spec="new open boxOrange boxBlue save saveAll print preview | undo redo | plane pickYellow target note noteFolder | *panel table | loadNew" />
          <ComboBox>
            <Combo aria-label="Load case">
              <option>RC1 - Maßgebende Ergebniskombinat</option>
            </Combo>
          </ComboBox>
          <Tools spec="prev next viewGrey xxGrey eye xxRed | glasses calc calcRow" />
        </ToolGroup>
        <ToolGroup $sep={5}>
          <Grip />
          <Tools spec="gridHand snap *csys csys2 csys3 meshGrey mark | moveCopy rotate mirror scaleX bomb frameBlue cluster" />
        </ToolGroup>
        <ToolGroup $sep={5} $grow>
          <Grip />
        </ToolGroup>
      </ToolbarRow>
      <ToolbarRow $h={17}>
        <ToolGroup $sep={6}>
          <Grip />
          <Tools spec="node v line member v polyline v | support supports surfSupport | hinge v dimXX dimGrid | surface v opening v solid v solidCup solidBox v | mergeBlock v loadNode loadMember loadMember loadSurface loadSolid v" />
        </ToolGroup>
        <ToolGroup $sep={6}>
          <Grip />
          <Tools spec="hand zoomIn zoomX cube cubes | axX axY axZ axMinusX v lamp v | gems v" />
        </ToolGroup>
        <ToolGroup $sep={6} $grow>
          <Grip />
          <Tools spec="frameGrey tagGrey | resI rainbow rainbowCube plusGreen slope panels v resI tables" />
        </ToolGroup>
      </ToolbarRow>
      <Workspace>
        <Navigator>
          <NavHeader>
            <NavTitle>Project Navigator - Display</NavTitle>
            <button aria-label="Pin">
              <svg width="8" height="8" viewBox="0 0 8 8" fill="none" stroke="#5b6472">
                <path d="M2.500 1h3v3.500h-3zM1.500 4.500h5M4 5v2.500" />
              </svg>
            </button>
            <button aria-label="Close">
              <svg width="8" height="8" viewBox="0 0 8 8" fill="none" stroke="#5b6472">
                <path d="M1.500 1.500l5 5M6.500 1.500l-5 5" />
              </svg>
            </button>
          </NavHeader>
          <NavBody>
            <Tree>
              {ITEMS.map((d, i) => (
                <Row key={i} data={d} index={i} />
              ))}
            </Tree>
            <ScrollTrack>
              <ScrollUp aria-label="Scroll up">
                <svg width="7" height="5" viewBox="0 0 7 5" fill="none" stroke="#4a4a4a" strokeWidth="1.300">
                  <path d="M1 4l2.500-2.500L6 4" />
                </svg>
              </ScrollUp>
              <ScrollThumb />
            </ScrollTrack>
            <Highlight />
          </NavBody>
        </Navigator>
        <Viewport>
          <ModelView />
        </Viewport>
      </Workspace>
    </Shell>
  );
}
